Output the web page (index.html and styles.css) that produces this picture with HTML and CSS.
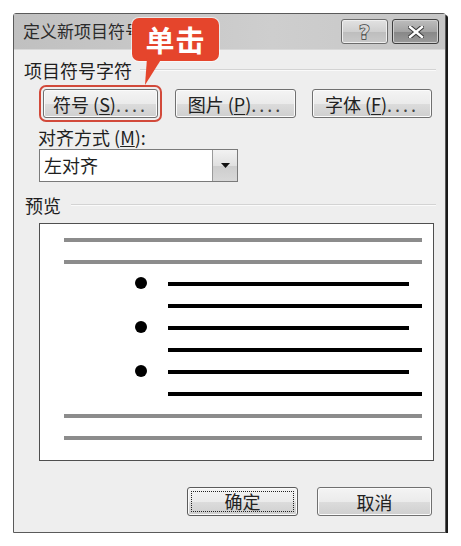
FILE: index.html
```html
<!DOCTYPE html>
<html lang="zh-CN">
<head>
  <meta charset="UTF-8">
  <title>定义新项目符号</title>
  <link rel="stylesheet" href="styles.css">
</head>
<body>

<div class="dialog" role="dialog" aria-labelledby="dlg-title">

  <div class="titlebar">
    <span class="title" id="dlg-title">定义新项目符号</span>
    <div class="cap-btns">
      <button class="cap help" aria-label="帮助">?</button>
      <button class="cap close" aria-label="关闭">
        <svg width="16" height="12" viewBox="0 0 16 12">
          <path d="M2 1 L14 11 M14 1 L2 11" stroke="#3a3a3a" stroke-width="4.5" stroke-linecap="square"/>
          <path d="M2 1 L14 11 M14 1 L2 11" stroke="#fff" stroke-width="2.4" stroke-linecap="square"/>
        </svg>
      </button>
    </div>
  </div>

  <div class="content">
    <div class="group"><span>项目符号字符</span><i class="rule"></i></div>

    <div class="btn-row">
      <button class="btn btn-symbol marked">符号 (<u>S</u>)<span class="dots">....</span></button>
      <button class="btn btn-pic">图片 (<u>P</u>)<span class="dots">....</span></button>
      <button class="btn btn-font">字体 (<u>F</u>)<span class="dots">....</span></button>
    </div>

    <div class="field-label">对齐方式 (<u>M</u>):</div>
    <div class="combo">
      <span class="combo-text">左对齐</span>
      <span class="combo-btn">
        <svg width="9" height="5" viewBox="0 0 9 5"><path d="M0 0 H9 L4.5 5 Z" fill="#111"/></svg>
      </span>
    </div>

    <div class="group group-preview"><span>预览</span><i class="rule"></i></div>

    <div class="preview">
      <div class="pv-row"><i class="ln gray"></i></div>
      <div class="pv-row"><i class="ln gray"></i></div>
      <div class="pv-row"><i class="dot"></i><i class="ln short"></i></div>
      <div class="pv-row"><i class="ln long"></i></div>
      <div class="pv-row"><i class="dot"></i><i class="ln short"></i></div>
      <div class="pv-row"><i class="ln long"></i></div>
      <div class="pv-row"><i class="dot"></i><i class="ln short"></i></div>
      <div class="pv-row"><i class="ln long"></i></div>
      <div class="pv-row"><i class="ln gray"></i></div>
      <div class="pv-row"><i class="ln gray"></i></div>
    </div>

    <div class="footer">
      <button class="btn btn-ok"><span class="focus">确定</span></button>
      <button class="btn btn-cancel">取消</button>
    </div>
  </div>

  <div class="callout">单击</div>
</div>

</body>
</html>
```

FILE: styles.css
```css
:root {
  --dlg-bg:     #eeeeee;
  --dlg-text:   #1e1e1e;
  --dlg-border: #5a5a5a;
  --mark-red:   #d2493a;
  --callout:    #e5452c;
}

* { box-sizing: border-box; }

body {
  margin: 0;
  background: #fff;
  font-family: "Noto Sans CJK SC", "Liberation Sans", sans-serif;
  color: var(--dlg-text);
}

.dialog {
  position: relative;
  margin: 13px 0 0 13px;
  width: 433px; height: 520px;
  border: 1px solid var(--dlg-border);
  border-radius: 3px 3px 0 0;
  background: var(--dlg-bg);
  box-shadow: 2px 2px 0 #1a1a1a;
}

/* title bar */
.titlebar {
  height: 36px;
  display: flex; align-items: center;
  justify-content: space-between;
  padding: 0 6px 0 9px;
  background: linear-gradient(to right, #c0c0c0, #cecece 60%, #c6c6c6);
  border-bottom: 1px solid #d9d9d9;
}

.title {
  font-size: 17px; line-height: 20px;
  color: #2b2b2b;
  margin-top: -1px;
}

.cap-btns { display: flex; gap: 4px; align-self: flex-start; margin-top: 5px; }

.cap {
  width: 47px; height: 25px;
  border: 1px solid #6c6c6c;
  border-radius: 3px;
  padding: 0;
  display: flex; align-items: center; justify-content: center;
  font-family: "DejaVu Sans", sans-serif;
}

.cap.help {
  background: linear-gradient(#e2e2e2, #cfcfcf 50%, #bdbdbd 51%, #c9c9c9);
  color: #d6d6d6;
  font-size: 19px; font-weight: bold;
  -webkit-text-stroke: 1.4px #3c3c3c;
  paint-order: stroke fill;
  box-shadow: inset 0 0 0 1px #efefef;
}

.cap.close {
  background: linear-gradient(#bdbdbd, #a3a3a3 50%, #878787 51%, #9a9a9a);
  border-color: #3e3e3e;
  box-shadow: inset 0 0 0 1px #cfcfcf;
}

/* body */
.content { padding: 0 9px 0 10px; }

.group {
  display: flex; align-items: center;
  height: 20px; margin-top: 10px;
  font-size: 18px;
}

.group span { white-space: nowrap; margin-right: 8px; }

.rule {
  flex: 1;
  border-top: 1px solid #d3d3d3;
  border-bottom: 1px solid #fafafa;
}

.btn {
  height: 29px;
  border: 1px solid #707070;
  border-radius: 3px;
  background: linear-gradient(#f4f4f4, #ebebeb 50%, #dcdcdc 51%, #cfcfcf);
  box-shadow: inset 0 0 0 1px #fbfbfb;
  font-family: inherit;
  font-size: 18px; line-height: 20px;
  color: #222;
  padding: 0;
  white-space: nowrap;
  cursor: pointer;
}

.btn u { text-underline-offset: 2px; }
.dots { letter-spacing: 3px; color: #444; }

.btn-row {
  display: flex; gap: 17px;
  margin: 9px 0 0 19px;
}

.btn-symbol { width: 115px; }
.btn-pic    { width: 121px; }
.btn-font   { width: 120px; margin-left: -1px; }

.marked {
  outline: 2px solid var(--mark-red);
  outline-offset: 2px;
}

.field-label {
  margin: 9px 0 0 14px;
  height: 20px; line-height: 20px;
  font-size: 18px;
}

.combo {
  display: flex;
  width: 199px; height: 33px;
  margin: 2px 0 0 15px;
  border: 1px solid #7a7a7a;
  background: #fff;
}

.combo-text {
  flex: 1;
  font-size: 18px; line-height: 31px;
  padding-left: 4px;
}

.combo-btn {
  width: 25px;
  display: flex; align-items: center; justify-content: center;
  border-left: 1px solid #9a9a9a;
  background: linear-gradient(#f2f2f2, #e0e0e0 50%, #cdcdcd 51%, #d8d8d8);
}

.group-preview { margin-top: 13px; }
.group-preview span { margin-left: 1px; margin-right: 10px; }

/* preview box */
.preview {
  width: 395px; height: 238px;
  margin: 8px 0 0 15px;
  padding-top: 5px;
  border: 1px solid #4f4f4f;
  background: #fff;
}

.pv-row {
  height: 22px;
  display: flex; align-items: center;
}

.ln { display: block; height: 4px; }
.ln.gray  { margin-left: 24px; width: 358px; background: #8c8c8c; }
.ln.short { margin-left: 21px; width: 241px; background: #000; }
.ln.long  { margin-left: 128px; width: 254px; background: #000; }

.dot {
  display: block;
  margin-left: 95px; margin-top: -3px;
  width: 12px; height: 12px;
  border-radius: 50%;
  background: #000;
}

/* footer */
.footer {
  display: flex; justify-content: flex-end; gap: 19px;
  margin: 26px 4px 0 0;
}

.btn-ok {
  width: 111px;
  border-color: #5b5b5b;
  padding: 3px;
}
.btn-cancel { width: 115px; }

.focus {
  display: block; height: 100%;
  border: 1px dotted #222;
  line-height: 19px;
}

/* red hint bubble */
.callout {
  position: absolute;
  left: 118px; top: 4px;
  width: 87px; height: 43px;
  background: var(--callout);
  border-radius: 7px;
  box-shadow: 0 0 0 1px rgba(255,255,255,.6);
  color: #fff;
  font-size: 29px; font-weight: bold;
  line-height: 43px; letter-spacing: 1px;
  text-align: center;
}

.callout::after {
  content: "";
  position: absolute;
  left: 10px; top: 40px;
  width: 22px; height: 27px;
  background: var(--callout);
  clip-path: polygon(5px 0, 20px 0, 3px 100%);
}
```
